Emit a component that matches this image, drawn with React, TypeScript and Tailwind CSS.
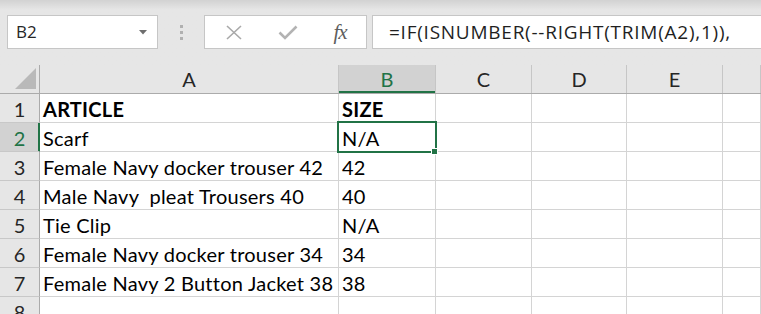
import React from "react";

const colW = ["w-[299px]", "w-[97px]", "w-[96px]", "w-[95px]", "w-[96px]", "flex-1"];
const colLetters = ["A", "B", "C", "D", "E", ""];

const rows: { a: string; b: string; bold?: boolean }[] = [
  { a: "ARTICLE", b: "SIZE", bold: true },
  { a: "Scarf", b: "N/A" },
  { a: "Female Navy docker trouser 42", b: "42" },
  { a: "Male Navy  pleat Trousers 40", b: "40" },
  { a: "Tie Clip", b: "N/A" },
  { a: "Female Navy docker trouser 34", b: "34" },
  { a: "Female Navy 2 Button Jacket 38", b: "38" },
  { a: "", b: "" },
];

export default function App() {
  return (
    <div className="w-[761px] h-[314px] overflow-hidden bg-[#e6e6e6] font-['Lato',sans-serif] text-black">
      {/* formula bar */}
      <div className="h-[65px] bg-gradient-to-b from-[#d2d2d2] via-[#e6e6e6] via-[15%] to-[#e6e6e6] pt-[15px] pl-[7px] flex items-start">
        <div className="w-[151px] h-[34px] bg-white border border-[#c6c6c6] flex items-center pl-[8px] pr-[10px] justify-between">
          <span className="font-['Open_Sans',sans-serif] text-[17px] text-[#262626]">B2</span>
          <svg width="8" height="5" viewBox="0 0 8 5">
            <path d="M0 0 L8 0 L4 4.5 Z" fill="#6e6e6e" />
          </svg>
        </div>
        <div className="w-[46px] h-[34px] flex flex-col items-center justify-center gap-[3px]">
          <div className="w-[3px] h-[3px] bg-[#b0b0b0]" />
          <div className="w-[3px] h-[3px] bg-[#b0b0b0]" />
          <div className="w-[3px] h-[3px] bg-[#b0b0b0]" />
        </div>
        <div className="w-[163px] h-[34px] bg-white border border-[#c6c6c6] flex items-center">
          <div className="w-[56px] flex justify-center pl-[2px]">
            <svg width="18" height="15" viewBox="0 0 18 15">
              <path d="M2 1 L16 14 M16 1 L2 14" stroke="#a9a9a9" strokeWidth="1.6" />
            </svg>
          </div>
          <div className="w-[54px] flex justify-center">
            <svg width="20" height="15" viewBox="0 0 20 15">
              <path d="M1.5 7.5 L7 13 L18.5 1.5" stroke="#b3b3b3" strokeWidth="2.6" fill="none" />
            </svg>
          </div>
          <div className="w-[50px] flex justify-center">
            <span className="font-['Liberation_Serif',serif] italic text-[21px] leading-none text-[#5e5e5e] tracking-[-1px]">fx</span>
          </div>
        </div>
        <div className="ml-[5px] flex-1 mr-[-4px] h-[34px] bg-white border border-[#c6c6c6] flex items-center pl-[16px]">
          <span className="font-['Open_Sans',sans-serif] text-[19px] tracking-[0.75px] text-[#1f1f1f] whitespace-nowrap">
            =IF(ISNUMBER(--RIGHT(TRIM(A2),1)),
          </span>
        </div>
      </div>

      {/* grid */}
      <div className="relative bg-white">
        {/* column header */}
        <div className="flex h-[29px] bg-[#e6e6e6] border-b border-[#ababab]">
          <div className="w-[40px] shrink-0 border-r border-[#ababab] relative">
            <svg className="absolute left-[15px] top-[3px]" width="22" height="22" viewBox="0 0 22 22">
              <path d="M21 0 L21 21 L0 21 Z" fill="#b9b9b9" />
            </svg>
          </div>
          {colLetters.map((l, i) => (
            <div
              key={i}
              className={`${colW[i]} shrink-0 flex items-center justify-center text-[20px] border-r ${
                i === 1
                  ? "bg-[#d2d2d2] text-[#217346] border-[#c6c6c6] shadow-[inset_0_-2px_0_#217346]"
                  : "text-[#262626] border-[#c6c6c6]"
              }`}
            >
              {l}
            </div>
          ))}
        </div>
        {rows.map((r, ri) => (
          <div key={ri} className="flex h-[29px]">
            <div
              className={`w-[40px] shrink-0 flex items-end justify-center pb-[1px] text-[20px] leading-[24px] border-b border-[#c8c8c8] border-r ${
                ri === 1
                  ? "bg-[#d2d2d2] text-[#217346] border-r-[#217346] shadow-[inset_-1px_0_0_#217346]"
                  : "bg-[#e6e6e6] text-[#262626] border-r-[#ababab]"
              }`}
            >
              {ri + 1}
            </div>
            {colW.map((w, ci) => (
              <div
                key={ci}
                className={`${w} shrink-0 border-r border-b border-[#d4d4d4] flex items-end pl-[3px] pb-[1px] text-[20px] leading-[24px] tracking-[0.25px] whitespace-pre ${
                  r.bold ? "font-bold" : ""
                }`}
              >
                {ci === 0 ? r.a : ci === 1 ? r.b : ""}
              </div>
            ))}
          </div>
        ))}
        {/* selection */}
        <div className="absolute left-[337px] top-[56px] w-[100px] h-[32px] border-2 border-[#217346] pointer-events-none" />
        <div className="absolute left-[431px] top-[83px] w-[7px] h-[7px] bg-[#217346] border border-white" />
      </div>
    </div>
  );
}
